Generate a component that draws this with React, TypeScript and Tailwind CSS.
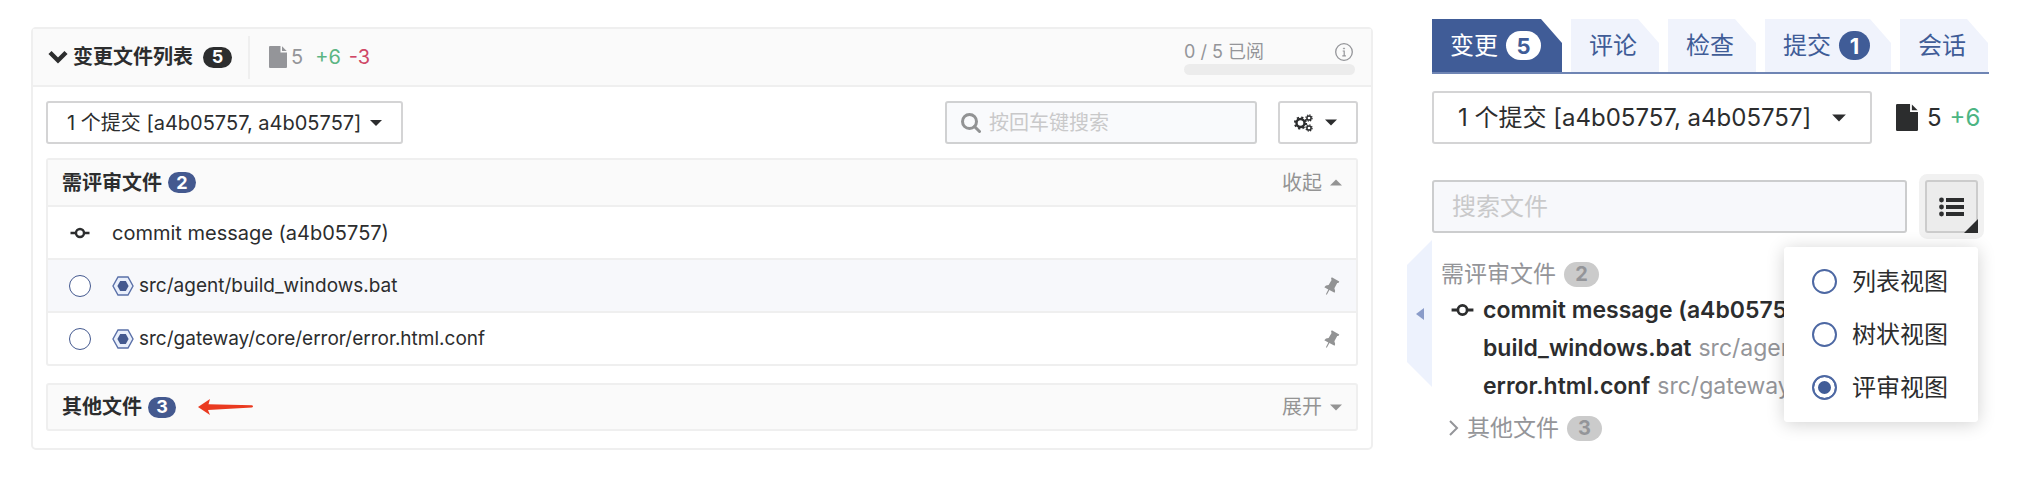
import type { ReactNode } from "react";
import { useState } from "react";
import clsx from "clsx";

const COMMIT_RANGE = "1 个提交 [a4b05757, a4b05757]";

const reviewFiles = ["src/agent/build_windows.bat", "src/gateway/core/error/error.html.conf"];

const sidebarFiles = [
  { name: "build_windows.bat", dir: "src/agent" },
  { name: "error.html.conf", dir: "src/gateway/core/error" },
];

const tabs = [
  { label: "变更", count: 5 },
  { label: "评论" },
  { label: "检查" },
  { label: "提交", count: 1 },
  { label: "会话" },
];

const views = ["列表视图", "树状视图", "评审视图"];

const Caret = ({ className, up }: { className?: string; up?: boolean }) => (
  <svg viewBox="0 0 12 7" className={className} fill="currentColor" aria-hidden="true">
    <path d={up ? "M6 0.5 12 6.5H0z" : "M0 0.5h12L6 6.5z"} />
  </svg>
);

const FileIcon = ({ className }: { className?: string }) => (
  <svg viewBox="0 0 18 22" className={className} fill="currentColor" aria-hidden="true">
    <path d="M1 0h10.5v6.5H18V21a1 1 0 0 1-1 1H1a1 1 0 0 1-1-1V1a1 1 0 0 1 1-1z" />
    <path d="M13 0.3 17.7 5H13z" />
  </svg>
);

const CommitIcon = ({ className }: { className?: string }) => (
  <svg viewBox="0 0 20 12" className={className} fill="none" stroke="currentColor" strokeWidth="2.4" aria-hidden="true">
    <circle cx="10" cy="6" r="4" />
    <path d="M0.5 6H6M14 6h5.5" />
  </svg>
);

const ModifiedIcon = () => (
  <svg viewBox="0 0 22 20" className="h-5 w-[22px]" aria-hidden="true">
    <path d="M6 1h10l5 9-5 9H6l-5-9z" fill="#e9effb" stroke="#5a70a8" strokeWidth="1.4" />
    <path d="M8.2 5h5.6l2.8 5-2.8 5H8.2l-2.8-5z" fill="#44598f" />
  </svg>
);

const GearsIcon = () => (
  <svg viewBox="0 0 19 18" className="h-[18px] w-[19px]" fill="none" stroke="currentColor" aria-hidden="true">
    <circle cx="6.5" cy="9" r="4" strokeWidth="2.4" />
    <circle cx="6.5" cy="9" r="5.6" strokeWidth="2" strokeDasharray="2.2 2.198" />
    <circle cx="15" cy="4" r="2.1" strokeWidth="1.5" />
    <circle cx="15" cy="4" r="3.1" strokeWidth="1.2" strokeDasharray="1.25 1.185" />
    <circle cx="15" cy="14" r="2.1" strokeWidth="1.5" />
    <circle cx="15" cy="14" r="3.1" strokeWidth="1.2" strokeDasharray="1.25 1.185" />
  </svg>
);

const PinIcon = () => (
  <svg viewBox="0 0 16 18" className="h-[18px] w-4 text-[#929394]" fill="currentColor" aria-hidden="true">
    <path d="M7.8 0.3 15.3 4.4 14.4 6 13.2 5.9 10.4 11.2Q11.6 13.6 10.6 15.8L5.4 13 2.8 17.8 1.9 17.3 4.3 12.4 0.3 10.2Q1.6 8.2 4.6 8.1L7.6 2.9 7 1.8z" />
  </svg>
);

const Badge = ({ children, className }: { children: ReactNode; className: string }) => (
  <span className={clsx("flex items-center justify-center rounded-full font-bold", className)}>{children}</span>
);

const CommitSelect = ({ className, caret }: { className: string; caret: string }) => (
  <div className="relative">
    <select aria-label="提交范围" className={clsx("appearance-none rounded-[3px] border-2 border-[#d4d4d5] bg-white", className)}>
      <option>{COMMIT_RANGE}</option>
    </select>
    <Caret className={clsx("pointer-events-none absolute top-1/2 -translate-y-1/2", caret)} />
  </div>
);

const FileListPanel = () => (
  <section className="mt-[27px] min-w-0 flex-1 self-start rounded-[5px] border-2 border-[#efefef] bg-white text-[20px] leading-7">
    <header className="flex h-[58px] items-center border-b-2 border-[#efefef] bg-[#fafafa] pr-4 pl-[15px]">
      <button className="flex items-center gap-[5px] font-bold">
        <svg viewBox="0 0 20 14" className="h-[14px] w-5" fill="none" stroke="currentColor" strokeWidth="4.4" aria-hidden="true">
          <path d="M2 2.5 10 10.5 18 2.5" />
        </svg>
        变更文件列表
      </button>
      <Badge className="ml-[10px] h-[21px] w-[29px] bg-[#2c2d2e] text-[18px] text-white">5</Badge>
      <div className="ml-4 h-[43px] w-[2px] bg-[#efefef]" />
      <div className="ml-[19px] flex items-center text-[#949599]">
        <FileIcon className="mr-1 h-[22px] w-[18px]" />
        <span className="mr-3">5</span>
        <span className="mr-2 text-[#5cb583]">+6</span>
        <span className="text-[#cf4766]">-3</span>
      </div>
      <div className="ml-auto w-[171px]">
        <div className="flex items-center justify-between pr-[2px] text-[18px] leading-6 text-[#949599]">
          0 / 5 已阅
          <svg viewBox="0 0 18 18" className="h-[18px] w-[18px]" fill="none" stroke="currentColor" aria-hidden="true">
            <circle cx="9" cy="9" r="8.3" strokeWidth="1.3" />
            <path d="M7.7 8h1.5v4.6M7.3 12.8h3.6" strokeWidth="1.2" />
            <circle cx="9" cy="5.5" r="0.6" strokeWidth="0.8" fill="currentColor" />
          </svg>
        </div>
        <div className="h-[11px] rounded-full bg-[#ececec]" />
      </div>
    </header>

    <div className="px-[13px] pt-[14px] pb-[17px]">
      <div className="flex items-center">
        <CommitSelect className="h-[43px] w-[357px] pl-[19px]" caret="right-[21px] h-[7px] w-3" />
        <label className="ml-auto flex h-[43px] w-[312px] items-center gap-2 rounded-[3px] border-2 border-[#d0d1d2] bg-[#f9fafc] pr-3 pl-[14px]">
          <svg viewBox="0 0 20 20" className="h-5 w-5 shrink-0 text-[#929394]" fill="none" stroke="currentColor" strokeWidth="3" aria-label="搜索">
            <circle cx="8.5" cy="8.5" r="7" />
            <path d="m13.5 13.5 5 5" strokeLinecap="round" />
          </svg>
          <input type="search" placeholder="按回车键搜索" className="min-w-0 flex-1 bg-transparent outline-none placeholder:text-[#c9c9ca]" />
        </label>
        <button aria-label="设置" className="ml-[21px] flex h-[43px] w-[80px] items-center gap-3 rounded-[3px] border-2 border-[#d4d4d5] bg-white pl-[14px]">
          <GearsIcon />
          <Caret className="h-[7px] w-3" />
        </button>
      </div>

      <div className="mt-[14px] rounded-[3px] border-2 border-[#efefef]">
        <div className="flex h-[47px] items-center border-b-2 border-[#efefef] bg-[#fafafa] px-[14px]">
          <h3 className="font-bold">需评审文件</h3>
          <Badge className="ml-[6px] h-[21px] w-7 bg-[#44598f] text-[18px] text-white">2</Badge>
          <button className="ml-auto flex items-center gap-2 text-[#949494]">
            收起 <Caret up className="h-[7px] w-3" />
          </button>
        </div>
        <div className="flex h-[53px] items-center border-b-2 border-[#efefef] pl-[22px]">
          <CommitIcon className="h-3 w-5" />
          <span className="ml-[22px]">commit message (a4b05757)</span>
        </div>
        {reviewFiles.map((file, i) => (
          <div
            key={file}
            className={clsx("flex items-center pr-4 pl-[21px]", i === 0 ? "h-[53px] border-b-2 border-[#efefef] bg-[#f7f8fb]" : "h-[51px]")}
          >
            <label className="flex items-center">
              <input type="checkbox" className="mr-[21px] h-[22px] w-[22px] appearance-none rounded-full border border-[#44598f] bg-white checked:bg-[#44598f]" />
              <ModifiedIcon />
              <span className="ml-[5px] text-[19px]">{file}</span>
            </label>
            <button aria-label="置顶" className="ml-auto">
              <PinIcon />
            </button>
          </div>
        ))}
      </div>

      <div className="mt-[17px] flex h-[48px] items-center rounded-[3px] border-2 border-[#efefef] bg-[#fafafa] px-[14px]">
        <h3 className="font-bold">其他文件</h3>
        <Badge className="ml-[6px] h-[21px] w-7 bg-[#44598f] text-[18px] text-white">3</Badge>
        <svg viewBox="0 0 56 16" className="ml-[22px] h-4 w-14" fill="#ea3a20" aria-hidden="true">
          <path d="M0 8 12 0 10.5 5.2 54 6.2Q56 7.4 54 8.4L10 11 12 16z" />
        </svg>
        <button className="ml-auto flex items-center gap-2 text-[#949494]">
          展开 <Caret className="h-[7px] w-3" />
        </button>
      </div>
    </div>
  </section>
);

const ReviewSidebar = () => {
  const [view, setView] = useState("评审视图");

  return (
    <aside className="flex w-[582px] shrink-0 pt-[19px]">
      <button
        aria-label="收起侧栏"
        className="mt-[221px] flex h-[147px] w-[25px] items-center justify-center bg-[#edf2fd] [clip-path:polygon(100%_0,100%_100%,0_83%,0_17%)]"
      >
        <svg viewBox="0 0 8 12" className="h-3 w-2" fill="#8a9cc9" aria-hidden="true">
          <path d="M8 0v12L0 6z" />
        </svg>
      </button>

      <div className="min-w-0 flex-1">
        <nav className="flex h-[55px] gap-[9px] border-b-2 border-[#6f85b4] text-[24px] leading-8 text-[#405c97]">
          {tabs.map((tab, i) => (
            <button
              key={tab.label}
              className={clsx(
                "flex items-center gap-2 pl-[18px] [clip-path:polygon(0_0,calc(100%_-_21px)_0,100%_24px,100%_100%,0_100%)]",
                i === 0 ? "bg-[#405c97] text-white" : "bg-[#f0f3fc]",
                tab.count ? "pr-[21px]" : "pr-[22px]",
              )}
            >
              {tab.label}
              {tab.count && (
                <Badge className={i === 0 ? "h-[29px] w-[35px] bg-white text-[22px] text-[#405c97]" : "h-[29px] w-[31px] bg-[#405c97] text-[22px] text-white"}>
                  {tab.count}
                </Badge>
              )}
            </button>
          ))}
        </nav>

        <div className="mt-[17px] flex items-center text-[24px] leading-8">
          <CommitSelect className="h-[53px] w-[440px] pl-6" caret="right-[26px] h-2 w-[14px]" />
          <FileIcon className="ml-6 h-[27px] w-[22px]" />
          <span className="ml-[9px]">5</span>
          <span className="ml-2 text-[#4cb583]">+6</span>
        </div>

        <div className="relative mt-[36px] flex items-center gap-[18px] pr-[11px] text-[24px] leading-8">
          <input
            type="search"
            aria-label="搜索文件"
            placeholder="搜索文件"
            className="h-[53px] min-w-0 flex-1 rounded-[3px] border-2 border-[#cccdce] bg-[#f7f8fb] px-[18px] outline-none placeholder:text-[#c9c9ca]"
          />
          <button
            aria-label="切换视图"
            className="relative flex h-[53px] w-[53px] items-center justify-center rounded-[3px] border-2 border-[#cccccc] bg-[#ececec] ring-6 ring-[#f1f1f1]"
          >
            <svg viewBox="0 0 25 20" className="h-5 w-[25px]" fill="currentColor" aria-hidden="true">
              <circle cx="2.5" cy="3" r="2.4" />
              <circle cx="2.5" cy="10" r="2.4" />
              <circle cx="2.5" cy="17" r="2.4" />
              <path d="M7 1h18v4H7zM7 8h18v4H7zM7 15h18v4H7z" />
            </svg>
            <svg viewBox="0 0 14 14" className="absolute -right-[2px] -bottom-[2px] h-[14px] w-[14px]" fill="currentColor" aria-hidden="true">
              <path d="M14 0v14H0z" />
            </svg>
          </button>

          {/* View switcher menu */}
          <fieldset aria-label="视图" className="absolute top-full right-[11px] z-10 mt-[14px] w-[194px] rounded-[4px] bg-white py-2 shadow-[0_2px_18px_rgba(0,0,0,0.18)]">
            {views.map((name) => (
              <label key={name} className="flex h-[53px] items-center gap-[15px] pl-7">
                <input
                  type="radio"
                  name="view"
                  checked={view === name}
                  onChange={() => setView(name)}
                  className="h-[25px] w-[25px] appearance-none rounded-full border-2 border-[#4d68a3] bg-white checked:bg-[#405c97] checked:shadow-[inset_0_0_0_4px_white]"
                />
                {name}
              </label>
            ))}
          </fieldset>
        </div>

        <div className="mt-6 overflow-hidden pl-[9px] text-[23px] leading-[38px] whitespace-nowrap">
          <div className="flex h-[34px] items-center gap-2 text-[#949599]">
            需评审文件
            <Badge className="h-[25px] w-[35px] bg-[#cbcbcb] text-[20px]">2</Badge>
          </div>
          <div className="flex items-center gap-[9px] pl-[10px] font-semibold">
            <CommitIcon className="h-[14px] w-[23px]" />
            commit message (a4b05757)
          </div>
          {sidebarFiles.map((file) => (
            <div key={file.name} className="flex gap-[7px] pl-[42px]">
              <span className="font-semibold">{file.name}</span>
              <span className="text-[#949599]">{file.dir}</span>
            </div>
          ))}
          <button className="mt-1 flex items-center gap-2 pl-2 text-[#949599]">
            <svg viewBox="0 0 10 16" className="h-4 w-[10px]" fill="none" stroke="currentColor" strokeWidth="2" aria-hidden="true">
              <path d="m1 1 7 7-7 7" />
            </svg>
            其他文件
            <Badge className="h-[25px] w-[35px] bg-[#cbcbcb] text-[20px]">3</Badge>
          </button>
        </div>
      </div>
    </aside>
  );
};

export default function App() {
  return (
    <main className="flex min-h-screen gap-[34px] bg-white px-[31px] font-['Inter','Noto_Sans_CJK_SC',sans-serif] text-[#2c2d2e]">
      <FileListPanel />
      <ReviewSidebar />
    </main>
  );
}
